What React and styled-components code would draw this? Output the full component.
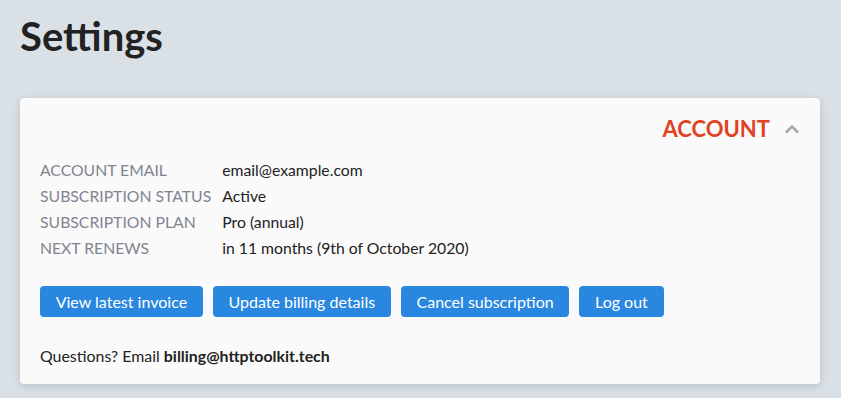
import React from "react";
import styled, { createGlobalStyle } from "styled-components";

const Global = createGlobalStyle`
  html, body { margin: 0; padding: 0; }
  body {
    background: #d9e0e6;
    font-family: Lato, "Open Sans", sans-serif;
    color: #222;
  }
`;

const Page = styled.div`
  padding: 12px 20px 20px 20px;
  box-sizing: border-box;
  width: 841px;
`;

const Title = styled.h1`
  margin: 0;
  font-size: 40px;
  line-height: 48px;
  font-weight: 700;
  color: #222;
`;

const Card = styled.section`
  margin-top: 38px;
  background: #fafafa;
  border-radius: 4px;
  box-shadow: 0 2px 8px rgba(0, 0, 0, 0.15);
  padding: 19px 20px 19px 20px;
  width: 800px;
  box-sizing: border-box;
`;

const CardHeader = styled.header`
  display: flex;
  justify-content: flex-end;
  align-items: center;
  gap: 14px;
  height: 24px;
`;

const CardTitle = styled.h2`
  margin: 0;
  font-size: 22px;
  line-height: 24px;
  font-weight: 700;
  color: #e1421f;
  text-transform: uppercase;
`;

const Collapse = styled.button`
  border: none;
  background: none;
  padding: 0;
  display: flex;
  align-items: center;
  cursor: pointer;
`;

const Details = styled.dl`
  margin: 16px 0 0 0;
  display: grid;
  grid-template-columns: auto 1fr;
  column-gap: 11px;
  font-size: 15.75px;
  line-height: 26px;
`;

const Label = styled.dt`
  color: #818490;
  text-transform: uppercase;
  margin: 0;
`;

const Value = styled.dd`
  margin: 0;
  color: #222;
`;

const Buttons = styled.div`
  display: flex;
  gap: 10px;
  margin-top: 25px;
`;

const Button = styled.button`
  font-family: Lato, "Open Sans", sans-serif;
  font-size: 16px;
  line-height: 19px;
  height: 31px;
  padding: 0 15.7px;
  border: none;
  border-radius: 4px;
  background: #2a87e0;
  color: #fff;
  cursor: pointer;
`;

const Footer = styled.p`
  margin: 29px 0 0 0;
  font-size: 15.9px;
  line-height: 19px;
  color: #222;
  strong { font-weight: 700; }
`;

const rows = [
  ["Account email", "email@example.com"],
  ["Subscription status", "Active"],
  ["Subscription plan", "Pro (annual)"],
  ["Next renews", "in 11 months (9th of October 2020)"],
];

export default function App() {
  return (
    <Page>
      <Global />
      <Title>Settings</Title>
      <Card>
        <CardHeader>
          <CardTitle>Account</CardTitle>
          <Collapse aria-label="collapse">
            <svg width="16" height="10" viewBox="0 0 16 10">
              <path d="M2 8.5 L8 2.5 L14 8.5" fill="none" stroke="#a3abb0" strokeWidth="2.6" />
            </svg>
          </Collapse>
        </CardHeader>
        <Details>
          {rows.map(([k, v]) => (
            <React.Fragment key={k}>
              <Label>{k}</Label>
              <Value>{v}</Value>
            </React.Fragment>
          ))}
        </Details>
        <Buttons>
          <Button>View latest invoice</Button>
          <Button>Update billing details</Button>
          <Button>Cancel subscription</Button>
          <Button>Log out</Button>
        </Buttons>
        <Footer>
          Questions? Email <strong>billing@httptoolkit.tech</strong>
        </Footer>
      </Card>
    </Page>
  );
}
